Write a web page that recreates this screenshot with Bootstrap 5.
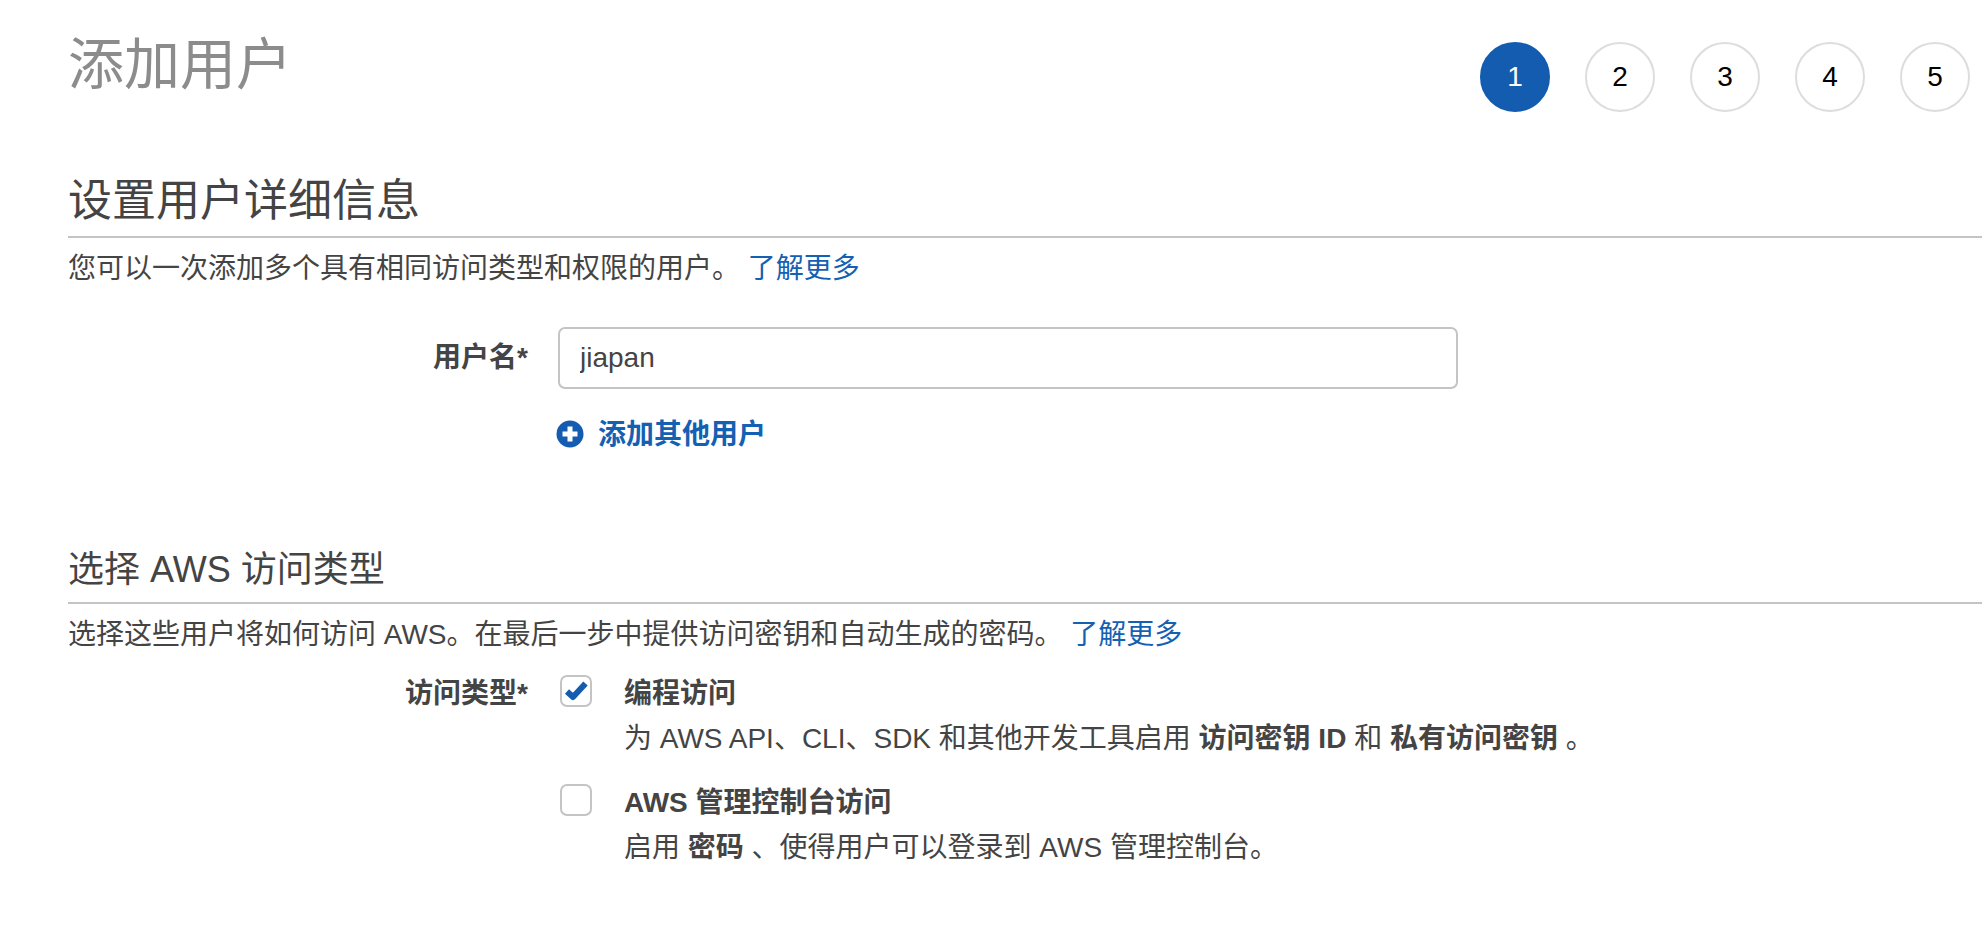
<!DOCTYPE html>
<html lang="zh-CN">
<head>
    <meta charset="UTF-8">
    <meta name="viewport" content="width=device-width, initial-scale=1.0">
    <title>添加用户</title>
    <link href="https://cdn.jsdelivr.net/npm/bootstrap@5.3.3/dist/css/bootstrap.min.css" rel="stylesheet">
    <script src="https://cdn.jsdelivr.net/npm/bootstrap@5.3.3/dist/js/bootstrap.bundle.min.js"></script>
    <style>
        body {
            font-family: "Liberation Sans", "Noto Sans CJK SC", sans-serif;
            font-size: 28px;
            line-height: 40px;
            color: #444;
            background: #fff;
        }
        a { color: #1460b3; text-decoration: none; }
        .wizard { padding: 28px 0 0 68px; }
        .wizard-title { font-size: 56px; line-height: 74px; color: #8c8c8c; font-weight: 400; margin: 0; }
        .steps { margin: 14px 12px 0 0; gap: 35px; }
        .step-dot {
            width: 70px;
            height: 70px;
            border: 2px solid #ddd;
            border-radius: 50%;
            color: #000;
            font-size: 28px;
        }
        .step-dot.active { background: #135cb0; border-color: #135cb0; color: #fff; }
        .sec-head { font-weight: 400; color: #444; margin: 0; border-bottom: 2px solid #c4c4c4; }
        .sec-one { font-size: 44px; line-height: 48px; margin-top: 65px; padding-bottom: 11px; }
        .sec-two { font-size: 36px; line-height: 44px; margin-top: 89px; padding-bottom: 10px; }
        .sec-text { margin: 11px 0 0; }
        .field-label { width: 460px; flex: none; text-align: right; font-weight: 700; }
        .user-row { margin-top: 38px; gap: 30px; }
        .user-input.form-control {
            width: 900px;
            height: 62px;
            border: 2px solid #c4c4c4;
            border-radius: 7px;
            padding: 0 20px;
            font-size: 28px;
            color: #444;
            box-shadow: none;
        }
        .add-user { margin: 26px 0 0 488px; font-weight: 700; gap: 14px; }
        .add-user svg { margin-bottom: 3px; }
        .type-row { margin-top: 19px; gap: 32px; }
        .type-list { gap: 24px; }
        .type-item { gap: 32px; }
        .type-check.form-check-input {
            width: 32px;
            height: 32px;
            margin: 1px 0 0;
            flex: none;
            border: 2px solid #c4c4c4;
            border-radius: 7px;
            background-color: #fff;
            background-size: 28px 28px;
            box-shadow: none;
        }
        .type-check.form-check-input:checked {
            background-image: url("data:image/svg+xml,%3Csvg xmlns='http://www.w3.org/2000/svg' viewBox='0 0 28 28'%3E%3Cpath d='M5 14.500l6 5.500L23.500 6.500' fill='none' stroke='%23135cb0' stroke-width='6' stroke-linejoin='round'/%3E%3C/svg%3E");
        }
        .type-name { font-weight: 700; }
        .type-desc { margin-top: 5px; }
    </style>
</head>
<body>

<div class="wizard">
    <!-- 标题和步骤 -->
    <div class="d-flex justify-content-between align-items-start">
        <h1 class="wizard-title">添加用户</h1>
        <div class="steps d-flex">
            <div class="step-dot active d-flex align-items-center justify-content-center">1</div>
            <div class="step-dot d-flex align-items-center justify-content-center">2</div>
            <div class="step-dot d-flex align-items-center justify-content-center">3</div>
            <div class="step-dot d-flex align-items-center justify-content-center">4</div>
            <div class="step-dot d-flex align-items-center justify-content-center">5</div>
        </div>
    </div>

    <!-- 设置用户详细信息 -->
    <h2 class="sec-head sec-one">设置用户详细信息</h2>
    <p class="sec-text">您可以一次添加多个具有相同访问类型和权限的用户。 <a href="#">了解更多</a></p>
    <div class="user-row d-flex align-items-center">
        <label class="field-label" for="userName">用户名*</label>
        <input class="user-input form-control" id="userName" type="text" value="jiapan">
    </div>
    <a class="add-user d-inline-flex align-items-center" href="#">
        <svg width="28" height="28" viewBox="0 0 28 28"><circle cx="14" cy="14" r="13.5" fill="#135cb0"/><path d="M14 6.500v15M6.500 14h15" stroke="#fff" stroke-width="5"/></svg>
        <span>添加其他用户</span>
    </a>

    <!-- 选择 AWS 访问类型 -->
    <h2 class="sec-head sec-two">选择 AWS 访问类型</h2>
    <p class="sec-text">选择这些用户将如何访问 AWS。在最后一步中提供访问密钥和自动生成的密码。 <a href="#">了解更多</a></p>
    <div class="type-row d-flex">
        <div class="field-label">访问类型*</div>
        <div class="type-list d-flex flex-column">
            <div class="type-item d-flex">
                <input class="type-check form-check-input" type="checkbox" checked>
                <div>
                    <div class="type-name">编程访问</div>
                    <div class="type-desc">为 AWS API、CLI、SDK 和其他开发工具启用 <b>访问密钥 ID</b> 和 <b>私有访问密钥</b> 。</div>
                </div>
            </div>
            <div class="type-item d-flex">
                <input class="type-check form-check-input" type="checkbox">
                <div>
                    <div class="type-name">AWS 管理控制台访问</div>
                    <div class="type-desc">启用 <b>密码</b> 、使得用户可以登录到 AWS 管理控制台。</div>
                </div>
            </div>
        </div>
    </div>
</div>

</body>
</html>
